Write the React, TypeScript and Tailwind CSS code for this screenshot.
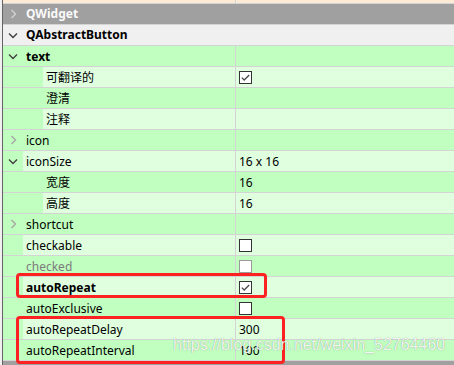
import React from 'react';

type PropRow = {
  name: string;
  depth: 1 | 2;
  light: boolean;
  expand?: 'open' | 'closed';
  value?: React.ReactNode;
  bold?: boolean;
  muted?: boolean;
};

const DARK = 'bg-[#c0ffc0]';
const LIGHT = 'bg-[#dfffdf]';

function ChevronDown({ color }: { color: string }) {
  return (
    <svg width="16" height="16" viewBox="0 0 16 16" fill="none">
      <path d="M4 6.5 L8 10.5 L12 6.5" stroke={color} strokeWidth="1.4" />
    </svg>
  );
}

function ChevronRight({ color }: { color: string }) {
  return (
    <svg width="16" height="16" viewBox="0 0 16 16" fill="none">
      <path d="M6.5 4 L10.5 8 L6.5 12" stroke={color} strokeWidth="1.4" />
    </svg>
  );
}

function CheckBox({ checked, disabled }: { checked?: boolean; disabled?: boolean }) {
  return (
    <span
      className={
        disabled
          ? 'w-[13px] h-[13px] border border-[#9a9a9a] bg-white flex items-center justify-center'
          : 'w-[13px] h-[13px] border border-[#333333] bg-white flex items-center justify-center'
      }
    >
      {checked && (
        <svg width="11" height="11" viewBox="0 0 11 11" fill="none">
          <path d="M1.8 5.6 L4.2 8 L9.2 3" stroke="#4a4a4a" strokeWidth="1.3" />
        </svg>
      )}
    </span>
  );
}

const rows: PropRow[] = [
  { name: 'text', depth: 1, light: false, expand: 'open', bold: true },
  { name: '可翻译的', depth: 2, light: true, value: <CheckBox checked /> },
  { name: '澄清', depth: 2, light: false },
  { name: '注释', depth: 2, light: true },
  { name: 'icon', depth: 1, light: false, expand: 'closed' },
  { name: 'iconSize', depth: 1, light: true, expand: 'open', value: '16 x 16' },
  { name: '宽度', depth: 2, light: false, value: '16' },
  { name: '高度', depth: 2, light: true, value: '16' },
  { name: 'shortcut', depth: 1, light: false, expand: 'closed' },
  { name: 'checkable', depth: 1, light: true, value: <CheckBox /> },
  { name: 'checked', depth: 1, light: false, muted: true, value: <CheckBox disabled /> },
  { name: 'autoRepeat', depth: 1, light: true, bold: true, value: <CheckBox checked /> },
  { name: 'autoExclusive', depth: 1, light: false, value: <CheckBox /> },
  { name: 'autoRepeatDelay', depth: 1, light: true, value: '300' },
  { name: 'autoRepeatInterval', depth: 1, light: false, value: '100' },
];

function GroupRow({ name, open, dark }: { name?: string; open: boolean; dark?: boolean }) {
  return (
    <div
      className={
        dark
          ? 'h-[21px] shrink-0 flex border-b border-[#d4d4d4] bg-[#a0a0a0] text-[#fafafa]'
          : 'h-[21px] shrink-0 flex border-b border-[#d4d4d4] bg-[#f0f0f0] text-black'
      }
    >
      <div className="w-[20px] shrink-0 flex items-center justify-center">
        {open ? <ChevronDown color="#404040" /> : <ChevronRight color="#d2d2d2" />}
      </div>
      <div className="pl-[3px] flex items-center font-bold">{name}</div>
    </div>
  );
}

function PropertyRow({ row }: { row: PropRow }) {
  const cellBg = row.light ? LIGHT : DARK;
  return (
    <div className={`h-[21px] shrink-0 flex border-b border-[#d4d4d4] ${cellBg}`}>
      <div className="w-[233px] shrink-0 flex border-r border-[#d4d4d4]">
        <div
          className={
            row.depth === 2
              ? `w-[40px] shrink-0 ${DARK}`
              : `w-[20px] shrink-0 flex items-center justify-center ${DARK}`
          }
        >
          {row.expand === 'open' && <ChevronDown color="#404040" />}
          {row.expand === 'closed' && <ChevronRight color="#a6a6a6" />}
        </div>
        <div
          className={[
            'pl-[3px] pt-px flex items-center whitespace-nowrap',
            row.bold ? 'font-bold' : '',
            row.muted ? 'text-[#7c7c7c]' : 'text-black',
          ].join(' ')}
        >
          {row.name}
        </div>
      </div>
      <div className="flex-1 pl-[3px] pt-px flex items-center text-black">{row.value}</div>
    </div>
  );
}

export default function App() {
  return (
    <div className="relative w-[454px] h-[365px] overflow-hidden bg-[#f0f0f0] pl-[2px] text-[12px] leading-none font-['Noto_Sans','Noto_Sans_CJK_SC',sans-serif]">
      <div className="h-full flex flex-col border-l border-[#646464] overflow-hidden">
        {/* previous row, scrolled almost out of view */}
        <div className="h-[21px] shrink-0 -mt-[17px] flex border-b border-[#d4d4d4] bg-[#fdebd5]">
          <div className="w-[233px] shrink-0 border-r border-[#d4d4d4]" />
          <div className="flex-1" />
        </div>

        <GroupRow name="QWidget" open={false} dark />
        <GroupRow name="QAbstractButton" open />
        {rows.map(row => (
          <PropertyRow key={row.name} row={row} />
        ))}
        <GroupRow open={false} dark />
      </div>

      {/* annotations */}
      <div className="absolute left-[16px] top-[273px] w-[251px] h-[25px] border-[3px] border-[#fc2222] rounded-[4px]" />
      <div className="absolute left-[16px] top-[316px] w-[269px] h-[48px] border-[3px] border-[#fc2222] rounded-[4px]" />

      <div className="absolute left-[173px] top-[336px] text-[16px] leading-[18px] text-white/90 font-['Liberation_Sans',sans-serif] [text-shadow:0_0_1px_rgba(0,0,0,0.45)] whitespace-nowrap">
        https://blog.csdn.net/weixin_52764460
      </div>
    </div>
  );
}
